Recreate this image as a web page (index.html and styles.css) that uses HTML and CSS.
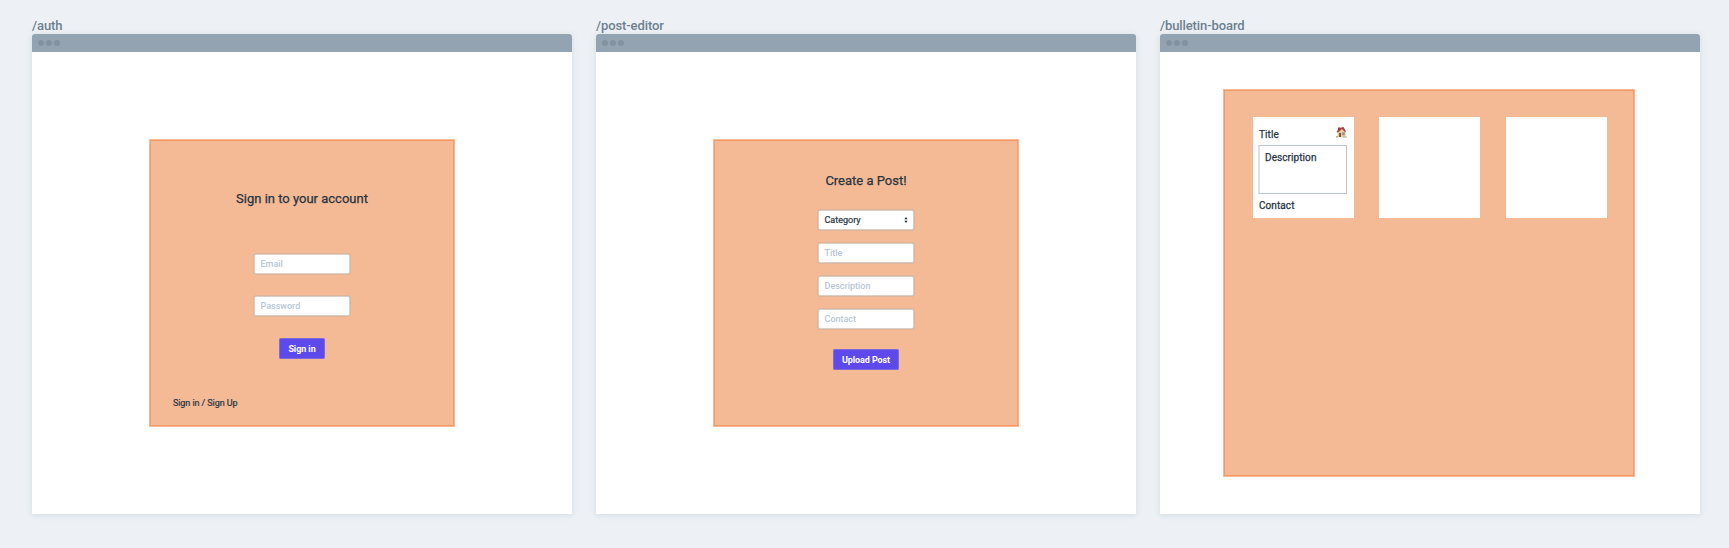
FILE: index.html
```
<!DOCTYPE html>
<html lang="en">
<head>
<meta charset="utf-8">
<title>Wireframes</title>
<link rel="stylesheet" href="styles.css">
</head>
<body>
<main class="board">
  <section class="screen">
    <h2 class="route">/auth</h2>
    <div class="window">
      <div class="titlebar"><i></i><i></i><i></i></div>
      <div class="content">
        <div class="panel auth">
          <h1 class="heading heading-auth">Sign in to your account</h1>
          <div class="field email"><span>Email</span></div>
          <div class="field password"><span>Password</span></div>
          <div class="button signin"><span>Sign in</span></div>
          <div class="switch"><span>Sign in / Sign Up</span></div>
        </div>
      </div>
    </div>
  </section>
  <section class="screen">
    <h2 class="route">/post-editor</h2>
    <div class="window">
      <div class="titlebar"><i></i><i></i><i></i></div>
      <div class="content">
        <div class="panel editor">
          <h1 class="heading heading-post">Create a Post!</h1>
          <div class="field select"><span>Category</span>
            <svg class="arrows" width="4" height="6" viewBox="0 0 4 6"><path d="M.3 2.2 2 0l1.7 2.200zM.3 3.800h3.400L2 6z" fill="#27343f"/></svg>
          </div>
          <div class="field"><span>Title</span></div>
          <div class="field"><span>Description</span></div>
          <div class="field"><span>Contact</span></div>
          <div class="button upload"><span>Upload Post</span></div>
        </div>
      </div>
    </div>
  </section>
  <section class="screen">
    <h2 class="route">/bulletin-board</h2>
    <div class="window">
      <div class="titlebar"><i></i><i></i><i></i></div>
      <div class="content">
        <div class="panel bulletin">
          <article class="card">
            <div class="card-head"><span>Title</span>
              <svg class="house" width="11" height="12" viewBox="0 0 22 24">
                <path d="M4 3h4v6H4z" fill="#8d3436"/>
                <path d="M3 12 12 5l7 7v10H3z" fill="#ecd2a1"/>
                <path d="M1 12 6 4l9-2 5 9-2 1-6-6-8 7z" fill="#a8403f"/>
                <path d="M6 14h4v8H6z" fill="#80543c"/>
                <path d="M12.500 13h5v5h-5z" fill="#6d9bb4" stroke="#b5926c"/>
                <path d="M0 20h4v3H0zM13 21h9v2h-9z" fill="#a5b58c"/>
              </svg>
            </div>
            <div class="card-body"><span>Description</span></div>
            <div class="card-foot"><span>Contact</span></div>
          </article>
          <article class="card"></article>
          <article class="card"></article>
        </div>
      </div>
    </div>
  </section>
</main>
</body>
</html>
```
FILE: styles.css
```
* { box-sizing: border-box; }
body {
  margin: 0;
  height: 548px;
  overflow: hidden;
  background: #edf1f6;
  color: #27343f;
  font-family: Roboto, "Liberation Sans", sans-serif;
}
h1, h2 { margin: 0; }
span { white-space: nowrap; }
.board { display: flex; gap: 24px; padding: 16px 0 0 32px; }
.screen { flex: 0 0 540px; }
.route { height: 18px; font-size: 13px; line-height: 19px; font-weight: 500; color: #6c7f8d; letter-spacing: -.1px; }
.window {
  height: 480px;
  display: flex;
  flex-direction: column;
  background: #fff;
  border-radius: 3px 3px 0 0;
  box-shadow: 0 1px 6px rgba(120, 145, 150, .22);
}
.titlebar {
  height: 18px;
  display: flex;
  gap: 2px;
  padding: 6px;
  background: #93a3b2;
  border-radius: 3px 3px 0 0;
}
.titlebar i { width: 6px; height: 6px; border-radius: 50%; background: #8292a0; }
.content { flex: 1; display: flex; }
.panel {
  display: flex;
  background: #f4ba96;
  border: 1px solid #f7b893;
  box-shadow: inset 0 0 0 1px #f19a67;
}
.auth, .editor {
  width: 306px;
  height: 288px;
  margin: 87px 0 0 117px;
  flex-direction: column;
  align-items: center;
}
.heading { font-size: 13px; line-height: 18px; font-weight: 400; -webkit-text-stroke: .25px #27343f; }
.heading-auth { margin: 50px 0 46px; }
.heading-post { margin: 32px 0 20px; }
.field {
  width: 96px;
  height: 20px;
  flex: none;
  display: flex;
  align-items: center;
  padding: 0 5px 0 5.5px;
  margin-bottom: 13px;
  background: #fff;
  border: 1px solid #d9cfc9;
  border-radius: 2px;
  box-shadow: 0 0 0 .5px #c9ad9c;
  color: #b8c6d3;
  font-size: 9px;
  line-height: 12px;
  font-weight: 500;
}
.email, .password { margin-bottom: 22px; }
.select { color: #27343f; justify-content: space-between; font-weight: 400; -webkit-text-stroke: .2px #27343f; }
.button {
  height: 21px;
  flex: none;
  display: flex;
  align-items: center;
  justify-content: center;
  background: #5e49ed;
  border-radius: 2px;
  box-shadow: inset 0 0 0 .5px #a28bc4;
  color: #fff;
  font-size: 9px;
  line-height: 12px;
  font-weight: 700;
  letter-spacing: -.08px;
}
.signin { width: 46px; }
.upload { width: 66px; margin-top: 7px; }
.switch { align-self: flex-start; margin: 38px 0 0 23px; font-size: 9px; line-height: 12px; font-weight: 400; letter-spacing: -.08px; -webkit-text-stroke: .2px #27343f; }
.bulletin {
  width: 412px;
  height: 388px;
  margin: 37px 0 0 63px;
  padding: 27px 0 0 29px;
  align-items: flex-start;
  gap: 25px;
}
.card { width: 101px; height: 101px; padding: 9px 7px 0 5px; background: #fff; font-size: 10px; line-height: 14px; font-weight: 400; letter-spacing: .08px; -webkit-text-stroke: .25px #27343f; }
.card:last-child { margin-left: 1px; }
.card-head { display: flex; justify-content: space-between; height: 19px; padding-left: 1px; line-height: 18px; }
.card-body { height: 49px; padding: 5px; border: 1px solid #b9c6d2; border-left-color: #d9e1ea; border-left-width: 2px; }
.card-foot { padding: 5px 0 0 1px; }
```
